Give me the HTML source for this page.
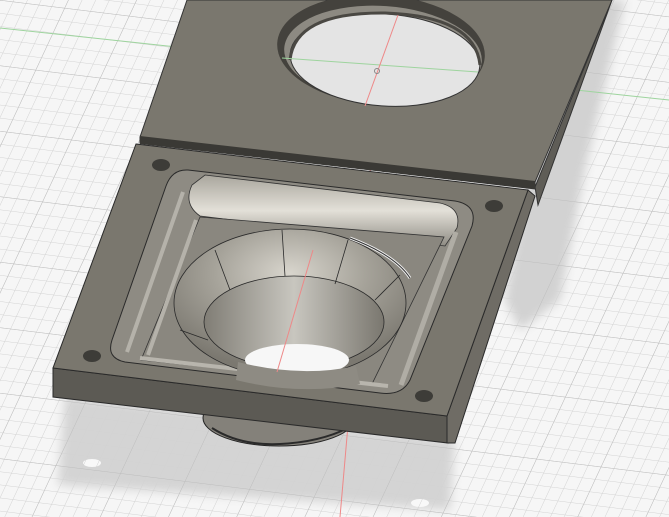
<!DOCTYPE html>
<html><head><meta charset="utf-8"><style>
html,body{margin:0;padding:0;background:#f5f5f5;overflow:hidden}
svg{display:block}
</style></head><body>
<svg width="669" height="517" viewBox="0 0 669 517" xmlns="http://www.w3.org/2000/svg">
<defs>
<pattern id="g" width="13" height="13" patternUnits="userSpaceOnUse" patternTransform="rotate(7) skewX(-18)">
<path d="M0 0H13M0 0V13" stroke="#d2d2d2" stroke-width="1" fill="none"/>
</pattern>
<pattern id="G" width="65" height="65" patternUnits="userSpaceOnUse" patternTransform="rotate(7) skewX(-18)">
<path d="M0 0H65M0 0V65" stroke="#bdbdbd" stroke-width="1" fill="none"/>
</pattern>
<filter id="b" x="-20%" y="-20%" width="140%" height="140%"><feGaussianBlur stdDeviation="5"/></filter>
<radialGradient id="bowl" cx="0.5" cy="0.3" r="0.65">
<stop offset="0" stop-color="#d8d5cd"/><stop offset="0.5" stop-color="#a6a39a"/><stop offset="1" stop-color="#7b7870"/>
</radialGradient>
<linearGradient id="funnel" x1="0" y1="0" x2="1" y2="0">
<stop offset="0" stop-color="#807d75"/><stop offset="0.5" stop-color="#c8c6bf"/><stop offset="1" stop-color="#7a776f"/>
</linearGradient>
<linearGradient id="rim" x1="0" y1="0" x2="0" y2="1">
<stop offset="0" stop-color="#a9a69d"/><stop offset="0.5" stop-color="#e3e0d8"/><stop offset="1" stop-color="#8f8c84"/>
</linearGradient>
</defs>
<rect width="669" height="517" fill="#f6f6f6"/>
<!-- shadows -->
<polygon points="560,0 625,0 585,170 560,300 520,330 505,300" fill="#d2d2d2" filter="url(#b)"/>
<polygon points="65,395 455,440 450,510 58,485" fill="#d4d4d4" filter="url(#b)"/>
<ellipse cx="92" cy="463" rx="9" ry="4" fill="#f8f8f8"/>
<ellipse cx="420" cy="503" rx="9" ry="4" fill="#f8f8f8"/>
<rect width="669" height="517" fill="url(#g)"/>
<rect width="669" height="517" fill="url(#G)"/>
<!-- axis lines -->
<line x1="0" y1="28" x2="669" y2="100" stroke="#9ed49e" stroke-width="1"/>
<line x1="385" y1="0" x2="340" y2="517" stroke="#e88" stroke-width="1"/>
<!-- top plate -->
<polygon points="612,0 538,205 535,187" fill="#5f5d57" stroke="#333" stroke-width="1"/>
<polygon points="187,0 612,0 535,182 535,189 140,143 140,137" fill="#7a776e" stroke="#333" stroke-width="1"/>
<polygon points="140,136 535,181 535,189 140,144" fill="#3a3935"/>
<!-- hole -->
<ellipse cx="381" cy="50" rx="104" ry="55" fill="#44423d" transform="rotate(4 381 50)"/>
<ellipse cx="383" cy="55" rx="99" ry="49" fill="#8d8a82" transform="rotate(4 383 55)"/>
<ellipse cx="385" cy="60" rx="95" ry="46" fill="#e4e4e4" stroke="#333" transform="rotate(4 385 60)"/>
<path d="M290,60 Q295,12 385,13 Q475,16 480,65" fill="none" stroke="#4a4843" stroke-width="3"/>
<line x1="282" y1="58" x2="478" y2="72" stroke="#9ed49e"/>
<line x1="398" y1="15" x2="365" y2="106" stroke="#e88"/>
<circle cx="377" cy="71" r="2.5" fill="none" stroke="#888"/>
<!-- nut under -->
<ellipse cx="279" cy="418" rx="76" ry="28" fill="#84817a" stroke="#222"/>
<path d="M212,428 Q240,446 280,444 Q320,442 348,428" fill="none" stroke="#2a2a2a" stroke-width="2"/>
<!-- bottom plate -->
<polygon points="53,368 447,416 448,443 53,397" fill="#5c5a54" stroke="#2a2a2a" stroke-width="1"/>
<polygon points="528,190 535,196 455,443 447,443 447,416" fill="#6f6c65" stroke="#2a2a2a" stroke-width="1"/>
<polygon points="136,144 528,190 447,416 53,368" fill="#7a776e" stroke="#2a2a2a" stroke-width="1"/>
<!-- screw holes -->
<ellipse cx="161" cy="165" rx="9" ry="6" fill="#3d3c38"/>
<ellipse cx="494" cy="206" rx="9" ry="6" fill="#3d3c38"/>
<ellipse cx="92" cy="356" rx="9" ry="6" fill="#3d3c38"/>
<ellipse cx="424" cy="396" rx="9" ry="6" fill="#3d3c38"/>
<!-- recess -->
<path d="M188,170 L455,201 Q478,205 472,226 L410,380 Q402,396 380,393 L125,362 Q106,358 112,340 L166,186 Q172,169 188,170Z" fill="#8e8b83" stroke="#2a2a2a"/>
<path d="M205,175 L440,203 Q462,208 457,228 L445,246 L200,216 Q183,204 192,185Z" fill="url(#rim)" stroke="#333" stroke-width="0.8"/>
<path d="M200,217 L444,237 L372,384 L141,360Z" fill="#8a877f" stroke="#333" stroke-width="0.8"/>
<path d="M183,192 L127,352 M196,220 L148,355" stroke="#b5b2aa" stroke-width="4" fill="none"/>
<path d="M456,232 L401,385" stroke="#b0ada5" stroke-width="5" fill="none"/>
<path d="M140,358 L388,386" stroke="#b8b5ad" stroke-width="4"/>
<!-- bowl -->
<ellipse cx="290" cy="303" rx="116" ry="74" fill="url(#bowl)" stroke="#2a2a2a" stroke-width="0.8"/>
<ellipse cx="294" cy="322" rx="90" ry="46" fill="url(#funnel)" stroke="#2a2a2a" stroke-width="0.8"/>
<ellipse cx="297" cy="360" rx="52" ry="16" fill="#f7f7f7"/>
<path d="M238,362 Q300,378 356,366 L360,384 Q300,396 236,380Z" fill="#8e8b83"/>
<path d="M282,230 L285,276 M348,240 L335,284 M215,250 L230,290 M400,275 L375,300 M180,330 L208,340" stroke="#2a2a2a" stroke-width="0.8" fill="none"/>
<path d="M350,238 Q395,255 410,278" stroke="#eee" stroke-width="3" fill="none"/>
<path d="M350,238 Q395,255 410,278" stroke="#333" stroke-width="1" fill="none"/>
<line x1="313" y1="250" x2="277" y2="372" stroke="#e88"/>
</svg>
</body></html>
